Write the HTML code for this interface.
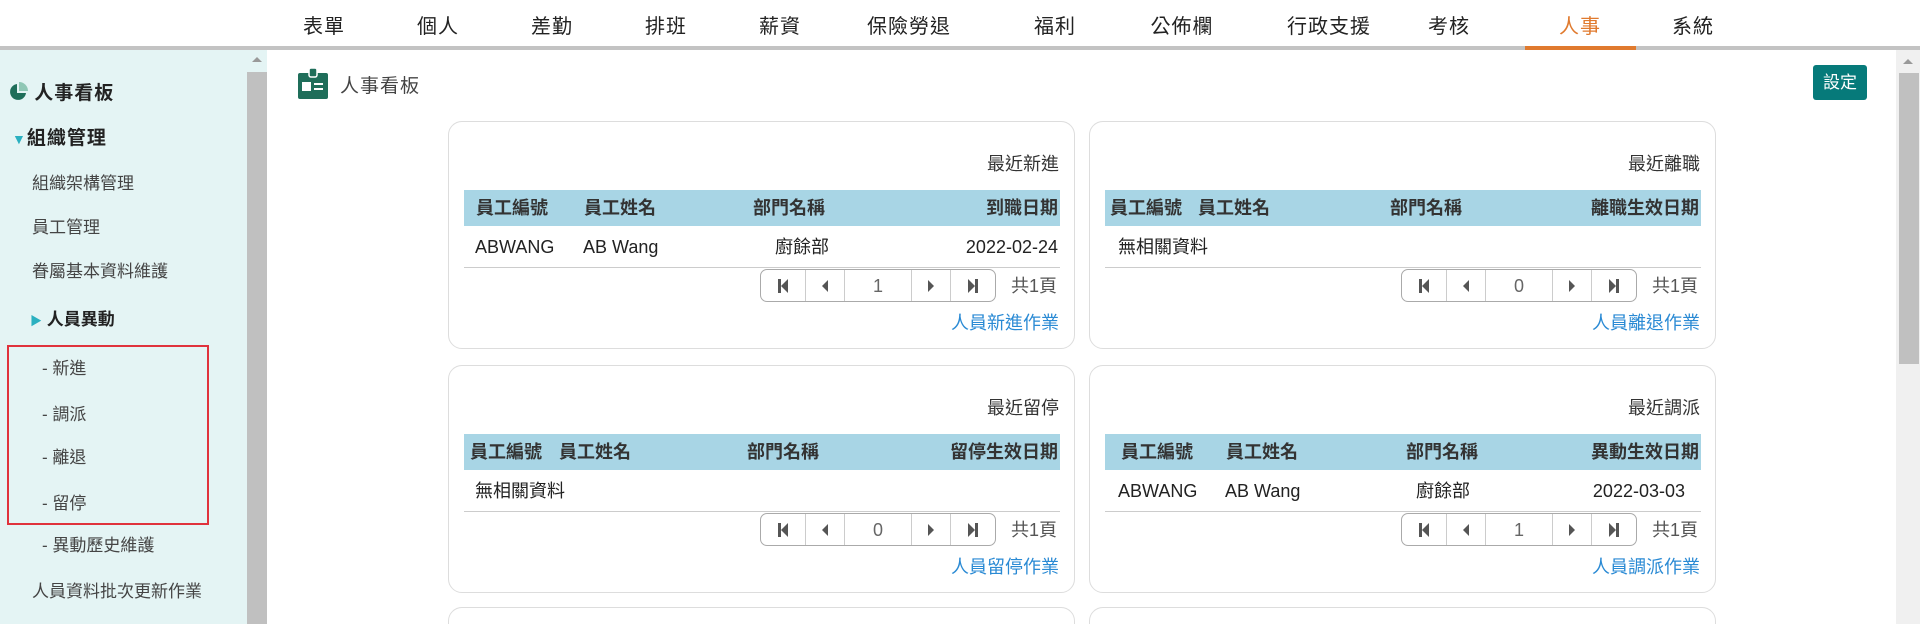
<!DOCTYPE html>
<html style="width:1920px;height:624px;overflow:hidden"><head><meta charset="utf-8"><style>
*{margin:0;padding:0;box-sizing:border-box}
body{width:1920px;height:624px;overflow:hidden;background:#fff;font-family:"Liberation Sans","Noto Sans CJK TC",sans-serif;color:#333;position:relative}
.nav{position:absolute;top:0;left:0;width:1920px;height:46px;background:#fff}
.nav span{position:absolute;top:10px;font-size:20px;color:#222;transform:translateX(-50%);letter-spacing:1px;white-space:nowrap}
.navline{position:absolute;top:46px;left:0;width:1920px;height:4px;background:#c3c3c3}
.act{position:absolute;top:46px;left:1525px;width:111px;height:4px;background:#e07a2e}
.side{position:absolute;top:50px;left:0;width:247px;height:574px;background:#e4f4f4}
.sb{position:absolute;top:50px;left:247px;width:20px;height:574px;background:#c0c0c0}
.sbup{position:absolute;top:50px;left:247px;width:20px;height:22px;background:#e4f4f4}
.side div{position:absolute;white-space:nowrap}
.h{font-size:19px;font-weight:bold;color:#222;letter-spacing:1px}
.i{font-size:17px;color:#444}
.red{position:absolute;left:7px;top:345px;width:202px;height:180px;border:2px solid #e0323c}
.rsb{position:absolute;top:50px;left:1896px;width:24px;height:574px;background:#f0f0f0}
.rthumb{position:absolute;top:73px;left:1899px;width:20px;height:291px;background:#c0c0c0}
.card{position:absolute;width:627px;height:228px;border:1px solid #ddd;border-radius:14px;background:#fff;overflow:hidden}
.card>*{position:absolute;white-space:nowrap;line-height:24px}
.ttl{right:15px;top:30px;font-size:18px;color:#333}
.band{left:15px;top:68px;width:596px;height:36px;background:#a8d5e5}
.hd{top:74px;font-size:18px;font-weight:bold;color:#333}
.td{top:113px;font-size:18px;color:#222}
.ln{left:15px;top:145px;width:596px;height:1px;background:#ccc}
.pg{left:311px;top:147px;width:236px;height:33px;border:1px solid #aaa;border-radius:7px;display:flex}
.pg div{border-right:1px solid #ccc;display:flex;align-items:center;justify-content:center;font-size:18px;color:#666}
.pg div:last-child{border-right:0}
.tot{left:562px;top:152px;font-size:18px;color:#555}
.lk{right:15px;top:189px;font-size:18px;color:#2a8ad4}
</style></head><body>
<div class="nav">
<span style="left:324px">表單</span><span style="left:438px">個人</span><span style="left:552px">差勤</span><span style="left:666px">排班</span><span style="left:780px">薪資</span><span style="left:909px">保險勞退</span><span style="left:1055px">福利</span><span style="left:1182px">公佈欄</span><span style="left:1329px">行政支援</span><span style="left:1449px">考核</span><span style="left:1580px;color:#e07a2e">人事</span><span style="left:1693px">系統</span>
</div>
<div class="navline"></div><div class="act"></div>
<div class="side">
<div class="h" style="left:8px;top:28px"><svg width="20" height="20" viewBox="0 0 20 20" style="vertical-align:-3px"><path d="M9 2A8 8 0 1 0 18 11H9Z" fill="#1f6e5a"/><path d="M11 0V9H20A9 9 0 0 0 11 0Z" fill="#8fc7b5"/></svg> 人事看板</div>
<div class="h" style="left:12px;top:73px"><span style="color:#2ab0c0;font-size:14px">▼</span>組織管理</div>
<div class="i" style="left:32px;top:119px">組織架構管理</div>
<div class="i" style="left:32px;top:163px">員工管理</div>
<div class="i" style="left:32px;top:207px">眷屬基本資料維護</div>
<div class="i" style="left:30px;top:255px;font-weight:bold;color:#222"><span style="color:#2ab0c0;font-size:12px">▶</span> 人員異動</div>
<div class="i" style="left:42px;top:304px">- 新進</div>
<div class="i" style="left:42px;top:350px">- 調派</div>
<div class="i" style="left:42px;top:393px">- 離退</div>
<div class="i" style="left:42px;top:439px">- 留停</div>
<div class="i" style="left:42px;top:481px">- 異動歷史維護</div>
<div class="i" style="left:32px;top:527px">人員資料批次更新作業</div>
</div>
<div class="red"></div>
<div class="sb"></div><div class="sbup"><svg width="20" height="20"><path d="M5 12L10 7L15 12Z" fill="#999"/></svg></div>
<div class="rsb"><svg width="24" height="20"><path d="M7 14L12 9L17 14Z" fill="#999"/></svg></div><div class="rthumb"></div>

<svg style="position:absolute;left:298px;top:67px" width="30" height="32" viewBox="0 0 30 32"><rect x="0" y="6" width="30" height="26" rx="2" fill="#1f6e5a"/><rect x="11" y="1" width="8" height="9" rx="2" fill="#1f6e5a" stroke="#fff" stroke-width="1.5"/><rect x="4" y="15" width="9" height="9" fill="#fff"/><rect x="16" y="16" width="9" height="2" fill="#fff"/><rect x="16" y="21" width="9" height="2" fill="#fff"/></svg>
<div style="position:absolute;left:340px;top:71px;font-size:19px;color:#444;letter-spacing:1px">人事看板</div>
<div style="position:absolute;left:1813px;top:65px;width:54px;height:35px;background:#067a7a;border-radius:3px;color:#fff;font-size:17px;text-align:center;line-height:35px">設定</div>

<svg width="0" height="0" style="position:absolute"><defs>
<g id="fst"><rect x="0" y="0" width="3" height="14" fill="#555"/><path d="M3 7L10 0V14Z" fill="#555"/></g>
<g id="prv"><path d="M0 7L6 1V13Z" fill="#555"/></g>
<g id="nxt"><path d="M6 7L0 1V13Z" fill="#555"/></g>
<g id="lst"><path d="M7 7L0 0V14Z" fill="#555"/><rect x="7" y="0" width="3" height="14" fill="#555"/></g>
</defs></svg>

<div class="card" style="left:448px;top:121px">
<div class="ttl">最近新進</div><div class="band"></div>
<div class="hd" style="left:27px">員工編號</div><div class="hd" style="left:135px">員工姓名</div><div class="hd" style="left:304px">部門名稱</div><div class="hd" style="right:16px">到職日期</div>
<div class="td" style="left:26px">ABWANG</div><div class="td" style="left:134px">AB Wang</div><div class="td" style="left:326px">廚餘部</div><div class="td" style="right:16px">2022-02-24</div>
<div class="ln"></div>
<div class="pg"><div style="width:45px"><svg width="10" height="14"><use href="#fst"/></svg></div><div style="width:39px"><svg width="6" height="14"><use href="#prv"/></svg></div><div style="width:68px">1</div><div style="width:39px"><svg width="6" height="14"><use href="#nxt"/></svg></div><div style="width:44px"><svg width="10" height="14"><use href="#lst"/></svg></div></div>
<div class="tot">共1頁</div><div class="lk">人員新進作業</div>
</div>

<div class="card" style="left:1089px;top:121px">
<div class="ttl">最近離職</div><div class="band"></div>
<div class="hd" style="left:20px">員工編號</div><div class="hd" style="left:108px">員工姓名</div><div class="hd" style="left:300px">部門名稱</div><div class="hd" style="right:16px">離職生效日期</div>
<div class="td" style="left:28px">無相關資料</div>
<div class="ln"></div>
<div class="pg"><div style="width:45px"><svg width="10" height="14"><use href="#fst"/></svg></div><div style="width:39px"><svg width="6" height="14"><use href="#prv"/></svg></div><div style="width:68px">0</div><div style="width:39px"><svg width="6" height="14"><use href="#nxt"/></svg></div><div style="width:44px"><svg width="10" height="14"><use href="#lst"/></svg></div></div>
<div class="tot">共1頁</div><div class="lk">人員離退作業</div>
</div>

<div class="card" style="left:448px;top:365px">
<div class="ttl">最近留停</div><div class="band"></div>
<div class="hd" style="left:21px">員工編號</div><div class="hd" style="left:110px">員工姓名</div><div class="hd" style="left:298px">部門名稱</div><div class="hd" style="right:16px">留停生效日期</div>
<div class="td" style="left:26px">無相關資料</div>
<div class="ln"></div>
<div class="pg"><div style="width:45px"><svg width="10" height="14"><use href="#fst"/></svg></div><div style="width:39px"><svg width="6" height="14"><use href="#prv"/></svg></div><div style="width:68px">0</div><div style="width:39px"><svg width="6" height="14"><use href="#nxt"/></svg></div><div style="width:44px"><svg width="10" height="14"><use href="#lst"/></svg></div></div>
<div class="tot">共1頁</div><div class="lk">人員留停作業</div>
</div>

<div class="card" style="left:1089px;top:365px">
<div class="ttl">最近調派</div><div class="band"></div>
<div class="hd" style="left:31px">員工編號</div><div class="hd" style="left:136px">員工姓名</div><div class="hd" style="left:316px">部門名稱</div><div class="hd" style="right:16px">異動生效日期</div>
<div class="td" style="left:28px">ABWANG</div><div class="td" style="left:135px">AB Wang</div><div class="td" style="left:326px">廚餘部</div><div class="td" style="right:30px">2022-03-03</div>
<div class="ln"></div>
<div class="pg"><div style="width:45px"><svg width="10" height="14"><use href="#fst"/></svg></div><div style="width:39px"><svg width="6" height="14"><use href="#prv"/></svg></div><div style="width:68px">1</div><div style="width:39px"><svg width="6" height="14"><use href="#nxt"/></svg></div><div style="width:44px"><svg width="10" height="14"><use href="#lst"/></svg></div></div>
<div class="tot">共1頁</div><div class="lk">人員調派作業</div>
</div>

<div class="card" style="left:448px;top:607px;height:40px"></div>
<div class="card" style="left:1089px;top:607px;height:40px"></div>
</body></html>
